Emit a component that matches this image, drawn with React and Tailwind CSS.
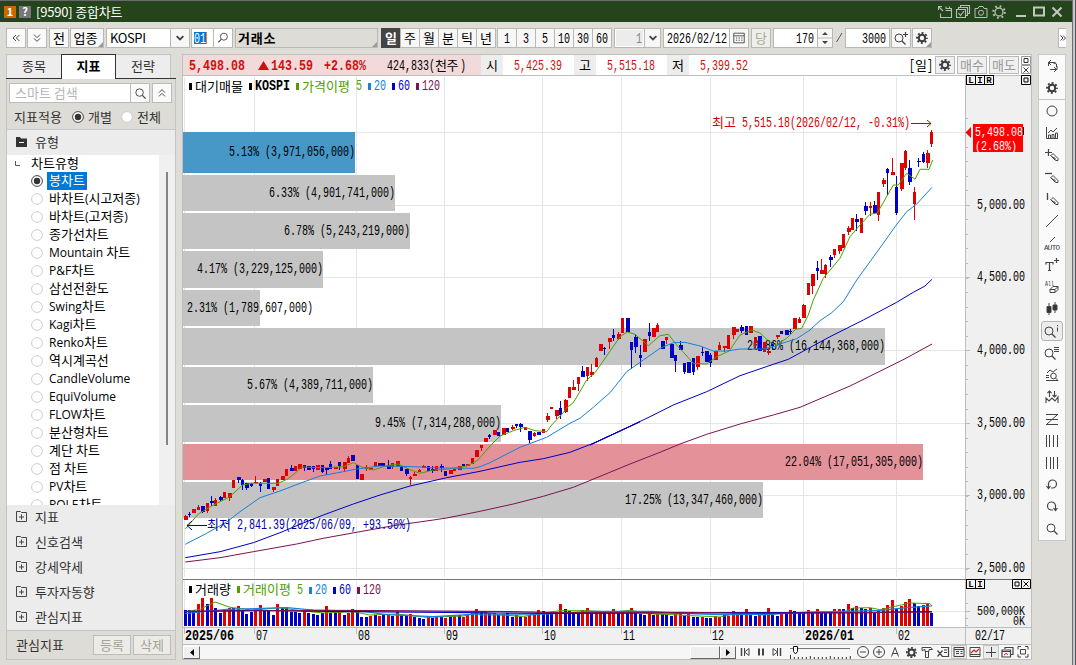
import React from "react";

const K = "font-['Noto_Sans_CJK_KR',sans-serif]";
const RED = "#e00000";
const BLUE = "#0000c8";
const GREEN = "#4ea000";
const SKY = "#1482d8";
const NAVY = "#0000c8";
const PLUM = "#7a1450";

/* ---------- text helpers ---------- */

// Condensed fixed-pitch text: each character takes `pitch` pixels.
function Mono({ children, pitch = 6, bold, className = "" }) {
  const s = String(children);
  return (
    <span className={"inline-block whitespace-pre text-left " + className} style={{ width: s.length * pitch }}>
      <span
        className={"inline-block origin-left font-['Liberation_Mono',monospace] text-[13px] leading-[16px] " + (bold ? "font-bold" : "")}
        style={{ transform: `scale(${pitch / 7.8}, 1.08)` }}
      >
        {s}
      </span>
    </span>
  );
}

function SMono({ x, y, children, fill = "#000", pitch = 6, bold, size = 14 }) {
  const s = String(children);
  return (
    <text x={x} y={y} fill={fill} fontSize={size} fontWeight={bold ? 700 : 400} fontFamily="'Liberation Mono', monospace" textLength={s.length * pitch} lengthAdjust="spacingAndGlyphs" xmlSpace="preserve">
      {s}
    </text>
  );
}

function SKor({ x, y, children, fill = "#000" }) {
  return (
    <text x={x} y={y} fill={fill} fontSize="13" fontFamily="'Noto Sans CJK KR', sans-serif">
      {children}
    </text>
  );
}

/* ---------- icons ---------- */

function Ico({ children, size = 16, color = "#444", className = "" }) {
  return (
    <svg width={size} height={size} viewBox="0 0 16 16" fill="none" stroke={color} strokeWidth="1" className={"shrink-0 " + className}>
      {children}
    </svg>
  );
}

const Gear = ({ color = "#3c3c3c", size = 16 }) => (
  <Ico color={color} size={size}>
    <circle cx="8" cy="8" r="3.2" strokeWidth="2" />
    <circle cx="8" cy="8" r="4.9" strokeWidth="2" strokeDasharray="1.92 1.93" strokeDashoffset="1" />
  </Ico>
);

const Mag = ({ dx = 0, dy = 0 }) => (
  <g transform={`translate(${dx} ${dy})`}>
    <circle cx="7" cy="7" r="4" />
    <path d="M10 10l3.5 3.5" strokeWidth="1.3" />
  </g>
);

const Pencil = () => <path d="M7 8.5l2-2 5 5v2h-2zM9.5 10l2 2M6.5 8.5l5 5" />;

const DownChev = () => (
  <Ico size={12}>
    <path d="M3.5 5.5L8 10l4.5-4.5" strokeWidth="2.4" />
  </Ico>
);

/* ---------- title bar ---------- */

function TitleBar() {
  return (
    <div className="flex h-[22px] items-center border-t border-[#6b6b6b] bg-[#24451b]">
      <div className={"ml-[4px] flex h-[12px] w-[12px] items-center justify-center bg-[#c86a00] text-[11px] font-bold text-white " + K}>1</div>
      <div className={"ml-[3px] flex h-[12px] w-[12px] items-center justify-center bg-[#777] text-[11px] font-bold text-white " + K}>?</div>
      <div className={"ml-[5px] whitespace-nowrap text-[13px] leading-[20px] tracking-[-0.2px] text-white " + K}>[9590] 종합차트</div>
      <div className="flex-1" />
      <div className="mr-[7px] flex items-center">
        <Ico color="#b9bdb6" className="mr-[2px]">
          <path d="M1.5 6V2.5H5M2 3l4 4M8.500 4.500h6v9h-11v-4M8.500 6.500h6M9 2.500v2M12.500 2.500v2" strokeWidth="1.1" />
        </Ico>
        <Ico color="#b9bdb6" className="mr-[2px]">
          <path d="M1.500 5.500h9v8h-9zM3.500 5V3.500h9v8H11M5.500 3V1.500h9v8H13M3.500 9l2 2.500L9 7" strokeWidth="1.100" />
        </Ico>
        <Ico color="#b9bdb6" className="mr-[2px]">
          <path d="M2 4.500h3l1-2h4l1 2h3v9H2z" />
          <circle cx="8" cy="8.800" r="2.500" />
        </Ico>
        <Ico color="#b9bdb6" className="mr-[6px]">
          <circle cx="8" cy="8" r="4" strokeWidth="1.300" />
          <circle cx="8" cy="8" r="5.800" strokeWidth="2" strokeDasharray="1.800 2.750" />
        </Ico>
        <Ico color="#c4c8c1" className="mr-[2px]">
          <path d="M3 12h10" strokeWidth="2" />
        </Ico>
        <Ico color="#c4c8c1" className="mr-[2px]">
          <path d="M3 3.500h10v8H3z" strokeWidth="2" />
        </Ico>
        <Ico color="#c4c8c1">
          <path d="M3.500 3.500l9 9M12.500 3.500l-9 9" strokeWidth="2" />
        </Ico>
      </div>
    </div>
  );
}

/* ---------- top toolbar ---------- */

function Box({ className = "", children }) {
  return (
    <div className={"relative flex h-[20px] shrink-0 items-center justify-center whitespace-nowrap border border-[#b9b9b4] text-[13px] leading-[18px] text-black " + K + " " + className}>
      {children}
    </div>
  );
}

const Corner = () => (
  <svg width="5" height="5" className="absolute right-0 bottom-0">
    <path d="M5 0v5H0z" fill="#999" />
  </svg>
);

function Toolbar() {
  const periods = ["주", "월", "분", "틱", "년"];
  const mins = ["1", "3", "5", "10", "30", "60"];
  return (
    <div className="flex h-[32px] items-center pl-[6px]">
      <Box className="w-[20px] bg-[#fafafa]">
        <Ico size={12}><path d="M8 4L4 8l4 4M12.500 4l-4 4 4 4" strokeWidth="1.300" /></Ico>
      </Box>
      <Box className="ml-[1px] w-[20px] bg-[#fafafa]">
        <Ico size={12}><path d="M4 3.500l4 4 4-4M4 8.500l4 4 4-4" strokeWidth="1.300" /></Ico>
      </Box>
      <Box className="ml-[2px] w-[20px] bg-[#f7f7f7]">전</Box>
      <Box className="ml-[1px] w-[34px] bg-[#f7f7f7] pr-[3px]">업종<Corner /></Box>
      <Box className="ml-[2px] w-[65px] justify-start! bg-white pl-[3px]"><span className="tracking-[-0.4px]">KOSPI</span></Box>
      <Box className="-ml-px w-[20px] bg-[#f7f7f7]"><DownChev /></Box>
      <Box className="ml-[1px] w-[23px] justify-start! bg-white pl-[2px]">
        <span className="flex h-[12px] w-[12px] items-center bg-[#0078d7] text-white"><Mono>01</Mono></span>
        <span className="h-[12px] w-px bg-[#f08020]" />
      </Box>
      <Box className="-ml-px w-[20px] bg-white">
        <Ico size={14}><circle cx="9" cy="6.500" r="4" /><path d="M6 9.500L2.500 13" strokeWidth="1.300" /></Ico>
      </Box>
      <Box className="ml-[2px] w-[143px] justify-start! bg-[#dddcd6] pl-[2px] font-bold tracking-[0.8px]">거래소<Corner /></Box>
      <div className="ml-[3px] flex">
        <Box className="w-[20px] border-[#444]! bg-[#444] font-bold text-white!">일</Box>
        {periods.map((p) => (
          <Box key={p} className="-ml-px w-[20px] bg-[#f7f7f7]">{p}</Box>
        ))}
      </div>
      <div className="ml-[1px] flex">
        {mins.map((p) => (
          <Box key={p} className="-ml-px w-[20px] bg-[#f7f7f7] first:ml-0"><Mono>{p}</Mono></Box>
        ))}
      </div>
      <Box className="ml-[2px] w-[31px] bg-white">
        <span className="flex h-[16px] w-[27px] items-center justify-end bg-[#ececec] pr-[1px] text-[#888]"><Mono>1</Mono></span>
      </Box>
      <Box className="-ml-px w-[17px] bg-[#f7f7f7]"><DownChev /></Box>
      <Box className="ml-[2px] w-[67px] bg-white"><Mono>2026/02/12</Mono></Box>
      <Box className="-ml-px w-[20px] bg-[#f7f7f7]">
        <Ico size={14}>
          <path d="M2 2.500h12v11H2zM2 5.500h12" />
          <path d="M4.500 8h8M4.500 10.500h8" strokeDasharray="1.500 1.500" />
        </Ico>
      </Box>
      <Box className="ml-[2px] w-[20px] bg-[#efefea] text-[#aaa898]!">당</Box>
      <Box className="ml-[2px] w-[45px] justify-end! bg-white pr-[3px]"><Mono>170</Mono></Box>
      <Box className="-ml-px w-[16px] flex-col bg-[#f7f7f7]">
        <svg width="14" height="18">
          <path d="M4 6l3-3 3 3zM4 12l3 3 3-3z" fill="#444" />
          <path d="M0 9h14" stroke="#b9b9b4" />
        </svg>
      </Box>
      <svg width="12" height="16"><path d="M3.500 12L9 3" stroke="#555" fill="none" /></svg>
      <Box className="w-[45px] justify-end! bg-white pr-[3px]"><Mono>3000</Mono></Box>
      <Box className="ml-[1px] w-[20px] bg-[#f7f7f7]">
        <Ico><Mag dx={-1} dy={1} /><path d="M10 4.500h5M12.500 2v5" strokeWidth="1.200" /></Ico>
      </Box>
      <Box className="ml-[1px] w-[20px] bg-[#f7f7f7]"><Gear /><Corner /></Box>
      <div className="flex-1" />
      <Box className="mr-[6px] w-[8px] border-r-0! bg-white">
        <svg width="6" height="8"><path d="M.5 1.500L3 4 .5 6.500M3 1.500L5.500 4 3 6.500" stroke="#444" fill="none" /></svg>
      </Box>
    </div>
  );
}

/* ---------- left panel ---------- */

function Radio({ on }) {
  return (
    <svg width="12" height="12" className="shrink-0">
      <circle cx="6" cy="6" r="5.400" fill="#fff" stroke={on ? "#444" : "#ccc"} />
      {on && <circle cx="6" cy="6" r="3.200" fill="#333" />}
    </svg>
  );
}

function Mixed({ text }) {
  return text.split(/([가-힣]+)/).filter(Boolean).map((s, i) => (
    <span key={i} className={/[가-힣]/.test(s) ? "text-[13px]" : "text-[12px]"}>{s}</span>
  ));
}

const chartTypes = ["봉차트", "바차트(시고저종)", "바차트(고저종)", "종가선차트", "Mountain 차트", "P&F차트", "삼선전환도", "Swing차트", "Kagi차트", "Renko차트", "역시계곡선", "CandleVolume", "EquiVolume", "FLOW차트", "분산형차트", "계단 차트", "점 차트", "PV차트", "POLE차트"];

function LeftPanel() {
  return (
    <div className={"flex h-[606px] w-[170px] flex-col text-[13px] text-[#333] " + K}>
      <div className="flex h-[25px] shrink-0 border-b border-[#333] leading-[22px]">
        <div className="w-[55px] border-t border-l border-[#c4c4c4] bg-[#ededed] text-center">종목</div>
        <div className="-mb-px h-[25px] w-[55px] border border-b-0 border-[#333] bg-white text-center font-bold text-black">지표</div>
        <div className="w-[55px] border-t border-r border-[#c4c4c4] bg-[#ededed] text-center">전략</div>
      </div>
      <div className="flex min-h-0 flex-1 flex-col border border-t-0 border-[#c4c4c4]">
        <div className="flex h-[28px] shrink-0 items-center pl-[2px]">
          <div className="h-[20px] w-[122px] border border-[#bbb] bg-white pl-[5px] leading-[17px] text-[#b5b5b5]">스마트 검색</div>
          <div className="-ml-px flex h-[20px] w-[20px] items-center justify-center border border-[#bbb] bg-[#fafafa]"><Ico size={15}><Mag /></Ico></div>
          <div className="ml-[2px] flex h-[20px] w-[20px] items-center justify-center border border-[#bbb] bg-[#fafafa]">
            <Ico size={12}><path d="M4 7.500l4-4 4 4M4 12.500l4-4 4 4" strokeWidth="1.300" /></Ico>
          </div>
        </div>
        <div className="flex h-[23px] shrink-0 items-center border-b border-[#c9c9c9] pb-[2px] pl-[7px]">
          <span className="w-[58px] whitespace-nowrap">지표적용</span><Radio on />
          <span className="ml-[4px] w-[33px] whitespace-nowrap">개별</span><Radio />
          <span className="ml-[4px] whitespace-nowrap">전체</span>
        </div>
        <div className="flex h-[25px] shrink-0 items-center bg-[#ececec] pb-[2px] pl-[9px]">
          <svg width="11" height="10"><path d="M0 0h4l1 1.500h6V10H0z" fill="#333" /><path d="M3 5.500h5" stroke="#fff" /></svg>
          <span className="ml-[8px]">유형</span>
        </div>
        <div className="flex h-[350px] shrink-0 overflow-hidden bg-[#f0f0f0]">
          <div className="w-[152px] overflow-hidden bg-white font-['Open_Sans','Noto_Sans_CJK_KR',sans-serif] text-black">
            <div className="flex h-[17px] items-center pl-[8px]">
              <svg width="6" height="6"><path d="M.5 0v4.500H5" fill="none" stroke="#555" /></svg>
              <span className="ml-[10px] text-[13px]">차트유형</span>
            </div>
            {chartTypes.map((t, i) => (
              <div key={t} className="flex h-[18px] items-center pl-[24px]">
                <Radio on={i === 0} />
                <span className={"ml-[4px] flex h-[18px] items-center whitespace-pre pr-[2px] pl-[2px] " + (i === 0 ? "bg-[#0078d7] text-white" : "")}>
                  <Mixed text={t} />
                </span>
              </div>
            ))}
          </div>
          <div className="mt-[17px] ml-[7px] h-[273px] w-[2px] bg-[#858585]" />
        </div>
        <div className="flex-1 bg-[#ececec]">
          {["지표", "신호검색", "강세약세", "투자자동향", "관심지표"].map((t) => (
            <div key={t} className="flex h-[25px] items-center pb-[2px] pl-[9px]">
              <svg width="11" height="11"><path d="M.5.500h4l1 1h5v9H.5zM3 6h5M5.500 3.500v5" fill="none" stroke="#444" /></svg>
              <span className="ml-[8px]">{t}</span>
            </div>
          ))}
        </div>
        <div className="flex h-[29px] shrink-0 items-center border-t border-[#c4c4c4] pl-[9px]">
          <span className="w-[77px] pb-px">관심지표</span>
          {["등록", "삭제"].map((t) => (
            <div key={t} className="mr-[2px] h-[20px] w-[38px] border border-[#bcbcb8] bg-[#ecebe8] text-center leading-[18px] text-[#a5a397]">{t}</div>
          ))}
        </div>
      </div>
    </div>
  );
}

/* ---------- price bar ---------- */

function PriceBar() {
  const cell = "flex h-full w-[22px] items-center justify-center bg-[#ededed]";
  const val = "flex h-full w-[71px] items-center bg-white pl-[11px] text-[#d01010]";
  const btn = "flex h-[18px] items-center justify-center border border-[#b9b9b9] bg-[#f0f0f0]";
  return (
    <div className={"flex h-[22px] items-center border-t border-b border-[#bfbfbf] bg-white text-[13px] " + K}>
      <div className="flex h-full w-[298px] items-center bg-[#f2dada] pl-[6px] font-bold text-[#d01010]">
        <Mono pitch={7} bold>5,498.08</Mono>
        <svg width="11" height="9" className="ml-[13px]"><path d="M5.500 0L11 9H0z" fill="#d01010" /></svg>
        <Mono pitch={7} bold className="ml-[2px]">143.59</Mono>
        <Mono pitch={7} bold className="ml-[11px]">+2.68%</Mono>
        <span className="ml-[21px] flex items-center font-normal text-black">
          <Mono>424,833(</Mono><span className="tracking-[-0.5px]">천주</span><Mono className="ml-[2px]">)</Mono>
        </span>
      </div>
      <div className={cell}>시</div><div className={val}><Mono>5,425.39</Mono></div>
      <div className={cell}>고</div><div className={val}><Mono>5,515.18</Mono></div>
      <div className={cell}>저</div><div className={val}><Mono>5,399.52</Mono></div>
      <div className="flex-1" />
      <span className="mr-[2px] flex items-center"><Mono>[</Mono>일<Mono>]</Mono></span>
      <div className={btn + " w-[20px]"}><Gear /></div>
      <div className={btn + " ml-[2px] w-[30px] text-[#999]"}>매수</div>
      <div className={btn + " ml-[2px] w-[30px] text-[#999]"}>매도</div>
      <svg width="10" height="18" className="ml-[2px]" fill="none" stroke="#333">
        <path d="M.5.500h9v8h-9zM.5 9.500h9v8h-9z" stroke="#999" />
        <path d="M3 2.500h4v4H3zM2.500 11.500l5 5M7.500 11.500l-5 5" />
      </svg>
    </div>
  );
}

/* ---------- chart data ---------- */

const P = 4.42;
const X0 = 185.5;
const cx = (i) => X0 + P * i;

// [direction, body top, body bottom, high?, low?] in thirds of a pixel below `base`
const candleBlocks = [
  { base: 430, rows: [
    "r257 269 254", "b253 255 246 262", "r237 249", "r230 240 225", "b227 246 227 250", "r219 243 219 250", "b213 220 198 228", "r210 228 205", "b201 210 198 217", "r186 205",
    "r189 204 189 213", "r150 175", "b141 150 141 160", "b149 164 147 180", "b159 175 159 180", "b163 168 160 170", "r155 160 138", "b158 168 155 186", "r147 157", "b144 177",
    "r171 180 171 186", "r147 168", "r138 150", "r117 138", "b113 123 104", "r108 123", "r101 117", "b104 114 104 123", "b107 120", "b107 118 107 125",
    "r104 119", "b104 125 104 130", "b113 120 113 136", "b103 118 93", "r112 118", "b96 108 96 121", "r97 118 97 123", "r83 99 78", "b74 92", "b104 147",
    "r131 150", "r110 118 105 123", "r113 119", "r97 107", "b98 108", "b99 109", "b104 118 90", "r100 112 100 118", "r94 108", "b108 123",
    "b117 132 117 138", "r141 147 137 165", "r133 137 126", "r121 126 116", "r107 115 104", "b107 122", "b117 123 109 128", "r107 122", "b107 115 103 125", "b123 138",
    "r120 131", "r117 122", "r108 120", "b102 109", "r101 108", "r84 101", "r59 80", "r45 55 45 63", "r24 36"] },
  { base: 410, rows: [
    "b75 81 72 88", "r60 74", "b66 77", "r54 75", "b53 66", "r51 57 45 60", "b42 48 42 54", "b42 52 39 66", "r51 60", "b63 90 63 98", "r69 77 66 80", "b66 75"] },
  { base: 300, rows: [
    "r388 398", "r347 360 339 366", "r320 326", "r330 347 330 357", "b324 346 303 357", "r300 335 297 338", "r261 293", "r261 269 240", "r231 251 231 273", "b213 231 198",
    "r202 227 202 242", "r215 225 192 230", "r174 200 171", "r132 153", "b144 147 141 165", "r114 126 114 147", "b105 115 87 124", "r102 116 97 120", "r54 99", "b54 96",
    "b126 150 126 208", "b111 141 102 159", "b165 174 135 200", "r117 156", "b96 108 69 122", "r84 111", "r75 96 69", "b123 147", "r111 120 111 132", "b131 174",
    "b165 183 165 215", "b135 150 123", "b189 216 189 222", "b186 220", "b174 216 174 224", "r168 201 168 210", "b155 158 141 168", "b153 186", "b165 189 159 200", "r154 180",
    "r135 151 126", "r138 144 138 155", "r105 147", "r81 104 81 117", "r87 95", "b81 94 75 98", "b78 105", "r78 98", "r111 128 111 147", "b108 153",
    "r126 155", "r153 158 145 165", "b126 137 126 150", "r105 110 105 117", "b93 102", "b91 104", "b93 95 87 101", "r54 87"] },
  { base: 110, rows: [
    "r627 640 620", "r585 624 581", "r519 555", "r492 527 492 551", "b474 482 453 510", "r480 491 447", "r465 492 462 503", "b441 450 435 471", "r417 435 417 443", "r405 423 405 431",
    "r372 413", "r354 366 348 375", "r324 360", "b327 335 312 362", "r324 369", "b288 303 276 314", "r288 293 276 317", "b285 308 273", "r246 315 246 332", "r210 221 204 230",
    "b177 188 174 255", "r186 195 144", "b231 308 198 314", "r159 237 159 242", "r123 174 120 180", "b174 215 150 224", "r246 282 231 330", "b153 157 144 170", "b132 155 126 160", "r129 159 120 174", "r66 101 60 110"] },
];

const candles = candleBlocks.flatMap(({ base, rows }) =>
  rows.map((r) => {
    const n = r.slice(1).split(" ").map(Number);
    const y = (v) => base + v / 3;
    return { up: r[0] === "r", t: y(n[0]), b: y(n[1]), h: y(n[2] ?? n[0]), l: y(n[3] ?? n[1]) };
  })
);

const volumes = (
  "b48 b48 b48 r66 r84 b66 r84 b54 b39 r47 r55 b54 r60 b48 b36 b43 r48 r63 b47 b45 b33 r66 b54 b55 b42 b42 b39 r47 b39 b36 " +
  "b33 b39 r60 b39 b40 r43 b33 r39 r51 b42 b27 b27 r30 b33 r30 b33 r36 b31 r43 b32 b30 r36 b27 b24 b21 r30 b25 r30 b26 r24 " +
  "b28 r30 b33 r28 r36 r39 r51 b43 r45 b39 r39 b36 r36 b39 b27 r33 b28 r27 r33 r33 r48 b45 b36 b36 r36 r66 b51 b45 b40 b38 " +
  "r48 r54 b39 r39 r42 b39 r42 r51 b38 r38 b42 r54 b39 b37 b33 r36 b33 r36 b36 b34 b30 r35 r36 b30 r36 b27 b27 r27 b24 b24 " +
  "r30 r27 b33 r30 r45 r40 b36 r51 b35 b31 r35 b35 r54 b36 b30 r35 b36 r48 b45 b38 b40 r48 b38 r51 b43 b41 b38 " +
  "r51 r51 b51 r66 b54 r60 b53 b51 r55 b38 r45 r54 r63 r78 b51 r60 r72 r81 b68 b60 r63 r68 b39"
).split(" ").map((s) => ({ up: s[0] === "r", h: Number(s.slice(1)) / 3 }));

const line = (...segs) =>
  segs.flatMap(([ox, oy, pts]) => pts.split(" ").map((p) => {
    const [x, y] = p.split(",").map(Number);
    return (ox + x / 3).toFixed(1) + "," + (oy + y / 3).toFixed(1);
  })).join(" ");

const ma5 = line(
  [180, 430, "16,297 55,252 95,228 148,201 188,165 215,160 294,160 321,148 345,130 365,111 430,113 490,110 520,98 545,111 580,120 620,107 655,102 690,119 720,130 760,120 800,118 860,108 890,93"],
  [480, 410, "0,143 30,108 60,78 100,62 135,52 165,62 200,65 215,45 250,8"],
  [540, 300, "78,325 100,308 140,240 165,218 200,168 240,110 262,96 285,103 325,137 360,107 385,103 410,135 435,162 460,190 500,192 530,170 568,153 600,105 635,90 660,99 690,127 710,136"],
  [780, 110, "0,697 20,685 47,658 65,655 85,615 100,570 130,505 180,445 210,380 240,345 270,313 292,309 340,225 355,225 380,190 405,208 420,178 447,178 458,150"]
);
const ma20 = line(
  [180, 430, "16,343 80,310 140,276 180,245 240,203 300,183 360,160 420,138 480,127 530,117 600,108 700,110 780,114 880,115"],
  [480, 410, "0,170 30,158 120,112 200,82 270,40"],
  [540, 300, "120,355 160,322 210,278 260,215 310,180 360,145 400,128 435,127 480,138 520,153 560,153 600,147 670,147 710,137"],
  [780, 110, "0,702 50,686 90,660 120,632 155,608 190,575 230,510 270,455 310,400 345,350 380,305 410,282 435,255 456,232"]
);
const ma60 = line(
  [180, 430, "16,383 120,365 220,338 300,308 360,283 430,255 520,222 600,195 690,168 800,143"],
  [480, 410, "0,184 120,157 190,146 270,127 340,100 420,63 480,35"],
  [540, 300, "150,435 240,393 330,350 400,315 500,275 600,227 700,193"],
  [780, 110, "25,748 150,680 250,630 350,577 400,547 435,528 456,508"]
);
const ma120 = line(
  [180, 430, "16,396 120,383 220,365 350,342 430,325 540,305 640,287 760,270 800,264"],
  [480, 410, "0,304 100,282 190,259 280,232 370,195 450,162 540,127 600,102"],
  [540, 300, "500,403 600,372 700,345 780,322"],
  [780, 110, "210,828 372,748 456,702"]
);
const v5 = line(
  [180, 430, "16,545 60,538 105,516 150,532 215,540 300,533 360,542 430,549 520,545 570,555 650,552 740,562 850,558 900,546"],
  [480, 410, "0,608 80,616 130,620 180,610 240,602 320,602 400,606 450,601 520,612 600,615"],
  [680, 560, "0,166 60,168 120,171 170,160 250,165 330,158 420,155 490,157 520,144 570,143 600,149 640,140 690,129 750,131 756,138"]
);
const v20 = line(
  [180, 430, "16,551 60,546 140,538 320,533 400,540 540,543 620,554 760,560 900,552"],
  [480, 410, "0,615 150,614 240,610 330,604 515,604"],
  [680, 560, "0,160 120,164 260,163 380,157 490,154 600,151 680,143 756,138"]
);
const v60 = line([180, 430, "30,545 220,541 450,544 800,547 950,549 1140,550"], [680, 560, "0,159 120,158 380,158 560,158 640,156 756,155"]);
const v120 = line([180, 430, "16,544 390,541 600,542 990,545 1140,548"], [680, 560, "0,157 240,160 560,158 756,156"]);

const profile = [
  [132, 41, 355, 229, 156, "5.13% (3,971,056,000)", "#4797c7"],
  [175, 36, 395, 269, 197, "6.33% (4,901,741,000)"],
  [213, 36, 410, 284, 235, "6.78% (5,243,219,000)"],
  [251, 37, 323, 197, 273, "4.17% (3,229,125,000)"],
  [290, 36, 260, 187, 312, "2.31% (1,789,607,000)"],
  [328, 37, 885, 747, 350, "20.86% (16,144,368,000)"],
  [367, 36, 373, 247, 389, "5.67% (4,389,711,000)"],
  [405, 37, 501, 375, 427, "9.45% (7,314,288,000)"],
  [444, 36, 923, 785, 466, "22.04% (17,051,305,000)", "#e4929a"],
  [482, 36, 763, 625, 504, "17.25% (13,347,460,000)"],
];

const gridX = [184.5, 254.5, 356.5, 444.5, 542.5, 621.5, 710.5, 803.5, 896.5];
const gridY = [132.5, 205.5, 277.5, 350.5, 423.5, 495.5, 568.5];
const priceLabels = ["", "5,000.00", "4,500.00", "4,000.00", "3,500.00", "3,000.00", "2,500.00"];
const months = [[185, "2025/06", 1], [256, "07"], [358, "08"], [446, "09"], [544, "10"], [623, "11"], [712, "12"], [805, "2026/01", 1], [898, "02"], [975, "02/17"]];

function Swatch({ x, y, fill }) {
  return <rect x={x} y={y} width="3" height="7" fill={fill} />;
}

function MaLegend({ x, y }) {
  return (
    <g>
      <Swatch x={x} y={y - 7} fill={SKY} /><SMono x={x + 6} y={y} fill={SKY}>20</SMono>
      <Swatch x={x + 24} y={y - 7} fill={NAVY} /><SMono x={x + 30} y={y} fill={NAVY}>60</SMono>
      <Swatch x={x + 48} y={y - 7} fill={PLUM} /><SMono x={x + 54} y={y} fill={PLUM}>120</SMono>
    </g>
  );
}

function LetterBoxes({ x, y, letters }) {
  return letters.map((l, i) => (
    <g key={l}>
      <rect x={x + i * 9 + 0.5} y={y + 0.5} width="9" height="9" fill="#f4f4f4" stroke="#000" />
      <text x={x + i * 9 + 5} y={y + 8.3} fontSize="9" fontWeight="700" textAnchor="middle" fontFamily="'Liberation Mono', monospace">{l}</text>
    </g>
  ));
}

function Chart() {
  return (
    <svg width="848" height="568" viewBox="183 76 848 568" className="block overflow-visible">
      <rect x="183" y="76" width="848" height="568" fill="#fff" />
      <g stroke="#e6e6e6" shapeRendering="crispEdges">
        {gridX.map((x) => <path key={x} d={`M${x} 77V577M${x} 581V627`} />)}
        {gridY.map((y) => <path key={y} d={`M183 ${y}H965`} />)}
        <path d="M183 611.500H965" />
      </g>
      <rect x="966" y="76" width="65" height="568" fill="#f0f0f0" />
      <rect x="183" y="628" width="848" height="16" fill="#f0f0f0" />

      {profile.map(([y, h, r, , , , c]) => <rect key={y} x="183" y={y} width={r - 183} height={h} fill={c || "#c4c4c4"} />)}
      {profile.map(([y, , , tx, ty, t]) => <SMono key={y} x={tx} y={ty}>{t}</SMono>)}

      <g shapeRendering="crispEdges">
        {candles.map((c, i) => {
          const x = Math.round(cx(i));
          const f = c.up ? RED : BLUE;
          return (
            <g key={i} fill={f}>
              <rect x={x - 2} y={Math.round(c.t)} width={i % 2 ? 3 : 4} height={Math.max(1, Math.round(c.b) - Math.round(c.t))} />
              <rect x={x - 1} y={Math.round(c.h)} width="1" height={Math.max(1, Math.round(c.l) - Math.round(c.h))} />
            </g>
          );
        })}
        {volumes.map((v, i) => {
          const x = Math.round(cx(i));
          const h = Math.round(v.h);
          return <rect key={i} x={x - 2} y={626 - h} width="3" height={h} fill={v.up ? RED : BLUE} />;
        })}
      </g>

      <g fill="none" strokeWidth="1">
        <polyline points={ma5} stroke={GREEN} />
        <polyline points={ma20} stroke={SKY} />
        <polyline points={ma60} stroke={NAVY} />
        <polyline points={ma120} stroke={PLUM} />
        <polyline points={v5} stroke={GREEN} />
        <polyline points={v20} stroke={SKY} strokeWidth="1.200" />
        <polyline points={v60} stroke={NAVY} strokeWidth="1.200" />
        <polyline points={v120} stroke={PLUM} strokeWidth="1.200" />
      </g>

      <SKor x={712} y={127} fill="#d00000">최고</SKor>
      <SMono x={742} y={127} fill="#d00000">5,515.18(2026/02/12, -0.31%)</SMono>
      <path d="M911 123.500H931M927 120l4 3.500-4 3.500" stroke="#d00000" fill="none" />
      <SKor x={207} y={529} fill="#0000a8">최저</SKor>
      <SMono x={237} y={529} fill="#0000a8">2,841.39(2025/06/09, +93.50%)</SMono>
      <path d="M207 525.500H187M192 521l-5 4.500 5 4.500" stroke="#0000a8" fill="none" />

      <Swatch x={189} y={83} fill="#000" /><SKor x={195} y={90.500}>대기매물</SKor>
      <Swatch x={249} y={83} fill="#000" /><SMono x={255} y={90} bold pitch={7}>KOSPI</SMono>
      <Swatch x={296} y={83} fill={GREEN} /><SKor x={302} y={90.500} fill={GREEN}>가격이평</SKor>
      <SMono x={356} y={90} fill={GREEN}>5</SMono>
      <MaLegend x={368} y={90} />
      <Swatch x={189} y={586} fill="#000" /><SKor x={195} y={594}>거래량</SKor>
      <Swatch x={237} y={586} fill={GREEN} /><SKor x={243} y={594} fill={GREEN}>거래이평</SKor>
      <SMono x={297} y={594} fill={GREEN}>5</SMono>
      <MaLegend x={309} y={594} />

      <g shapeRendering="crispEdges" stroke="#bdbdbd">
        <path d="M965.500 76V644M183 627.500H1031" />
        {gridX.map((x) => <path key={x} d={`M${x} 628v6`} />)}
        {Array.from({ length: 32 }, (_, i) => <path key={i} d={`M966 ${Math.round(117.500 + i * 14.550) + 0.5}h2`} />)}
        {gridY.map((y) => <path key={y} d={`M966 ${y}h4`} />)}
        <path d="M966 603.500h2M966 611.500h4M966 618.500h2M966 625.500h2" />
        <path d="M183 579.500H1031" stroke="#777" />
      </g>
      {gridY.map((y, i) => priceLabels[i] && <SMono key={y} x={977} y={y + 3}>{priceLabels[i]}</SMono>)}
      <SMono x={977} y={615} size={13}>500,000K</SMono>
      <SMono x={1013} y={625} size={13}>0K</SMono>
      {months.map(([x, t, b]) => <SMono key={x} x={x} y={640} bold={!!b} pitch={b ? 7 : 6}>{t}</SMono>)}

      <rect x="973" y="124" width="50" height="28" fill="#ff0000" />
      <path d="M965.500 132.500l5.500-5.500v11z" fill="#ff0000" />
      <path d="M1023.500 127v8" stroke="#000" />
      <SMono x={975} y={136} fill="#fff" size={13}>5,498.08</SMono>
      <SMono x={975} y={149.500} fill="#fff" size={13}>(2.68%)</SMono>

      <LetterBoxes x={966} y={75} letters={["L", "I", "R"]} />
      <LetterBoxes x={966} y={579} letters={["L", "I"]} />
      <g fill="#f4f4f4" stroke="#000">
        <path d="M1021.500 75.500h9v9h-9zM1024 78h4v4h-4zM1012.500 579.500h9v9h-9zM1021.500 579.500h9v9h-9zM1015 582h4v4h-4zM1023.500 581.500l5 5M1028.500 581.500l-5 5" />
      </g>
    </svg>
  );
}

/* ---------- bottom controls ---------- */

const wIco = (pressed) => "flex h-[14px] w-[16px] shrink-0 items-center justify-center " + (pressed ? "border border-[#c4c4c4] bg-[#ececec]" : "");
const bevel = "flex h-[13px] shrink-0 items-center justify-center border border-t-[#fff] border-l-[#fff] border-r-[#666] border-b-[#666] bg-[#efefef]";

function BottomBar() {
  return (
    <div className="flex h-[15px] items-center border-t border-[#bdbdbd] bg-[#f7f7f7]">
      <div className={bevel + " w-[17px]"}><svg width="4" height="7"><path d="M4 0v7L0 3.500z" /></svg></div>
      <div className="h-[14px] flex-1 bg-[#f6f6f4]" />
      <div className={bevel + " w-[30px]"} />
      <div className={bevel + " w-[16px]"}><svg width="4" height="7"><path d="M0 0v7L4 3.500z" /></svg></div>
      <div className="ml-[1px] flex">
        <div className={wIco()}><Ico><path d="M4.500 4v8" strokeWidth="1.500" /><path d="M12 4.500L7.500 8l4.500 3.500zM7.500 4v8" /></Ico></div>
        <div className={wIco()}><Ico><path d="M6 4.500v7M10 4.500v7" strokeWidth="2" /></Ico></div>
        <div className={wIco()}><Ico><path d="M11.500 4v8" strokeWidth="1.500" /><path d="M4 4.500L8.500 8 4 11.500zM8.500 4v8" /></Ico></div>
      </div>
      <svg width="70" height="14" className="shrink-0" fill="none" stroke="#333">
        <path d="M5 3.500h60" stroke="#777" />
        <path d="M5.500 10v4" /><path d="M9.300 12v2m4-2v2m4-2v2m4-2v2m4-3v3m4-2v2m4-2v2m4-2v2m4-2v2m4-3v3m4-2v2m4-2v2m4-2v2m4-2v2m4-3v3" />
        <path d="M8.500 1.500h4v5l-2 2.500-2-2.500z" fill="#fff" stroke="#111" />
      </svg>
      <div className="flex">
        <div className={wIco()}><Ico><circle cx="8" cy="8" r="5.500" /><path d="M5 8h6" /></Ico></div>
        <div className={wIco()}><Ico><circle cx="8" cy="8" r="5.500" /><path d="M5 8h6M8 5v6" /></Ico></div>
        <div className={wIco()}><Ico><path d="M4.500 12.500L8 3.500l3.500 9M5.500 9.500h5" /></Ico></div>
        <div className={wIco()}><Gear size={15} /></div>
        <div className={wIco()}><Ico><path d="M3 6.500v-3h9l1.500 2H10v2H6v-2zM6.500 8v5.500h3V8" /></Ico></div>
        <div className={wIco()}><Ico><path d="M6 3.500h7.500v9h-6M9 6h3M9 8.500h3M2.500 6.500l5 6M7.500 6.500l-5 6" strokeWidth="1.200" /></Ico></div>
        <div className={wIco(true)}><Ico><path d="M3 3.500h10v9H3zM3 5.500h10M5 7.500h3M9.500 7.500h2M5 9.500h3M9.500 9.500h2" /></Ico></div>
        <div className={wIco()}><Ico><path d="M3 3.500h10v9H3zM3 10.500h10" /><path d="M4 9l3-3 2 2 3-3" stroke="#d02020" strokeWidth="1.200" /></Ico></div>
        <div className={wIco(true)}><Ico><path d="M8.500 3v10M3 8.500h10" /></Ico></div>
        <div className={wIco()}><Ico><path d="M6 5V3.500h8v7h-2M3 6h8.500v7H3zM3 7.500h8.500" strokeWidth="1.200" /><path d="M5 11l2-1.500 2 1" stroke="#d02020" /></Ico></div>
        <div className={wIco()}><Ico><path d="M3 5.500v-3h3M10 2.500h3v3M13 10v3h-3M6 13H3v-3M5.500 5.500h5v4.500h-5z" /></Ico></div>
      </div>
    </div>
  );
}

/* ---------- right tool strip ---------- */

const tools = [
  <Ico key="t1"><path d="M4.500 8V4.500h7M4.500 4.500L7 2M4.500 4.500L7 7M4.500 4.500h4l4 1.500v3M13 8v3.500H6M10 9l2.500 2.500L10 14" /></Ico>,
  <Gear key="t2" />,
  <Ico key="t3"><circle cx="8" cy="8" r="5" /></Ico>,
  <Ico key="t4"><path d="M2.500 2v11.500H14M4 8l3-3 2 2 4-4M4.500 13v-3h2v3M8 13V9.500h2V13M11.500 13V8h2v5" /></Ico>,
  <Ico key="t5"><path d="M1 5.500h7M4.500 2v7" strokeWidth="1.200" /><Pencil /></Ico>,
  <Ico key="t6"><path d="M1 4.500h7" strokeWidth="1.300" /><Pencil /></Ico>,
  <Ico key="t7"><path d="M3.500 2v7" strokeWidth="1.300" /><Pencil /></Ico>,
  <Ico key="t8"><path d="M2 14L14 2" /></Ico>,
  <Ico key="t9"><path d="M6 7l5-5" /><text x="0" y="14.500" fontSize="7.500" textLength="16" fill="#333" stroke="none" fontFamily="'Liberation Mono', monospace">AUTO</text></Ico>,
  <Ico key="t10"><path d="M2 7.500V5.500h7v2M5.500 5.500v8M4 13.500h3M10 3.500h5M12.500 1v5" strokeWidth="1.200" /></Ico>,
  <Ico key="t11"><text x="1" y="6.500" fontSize="8" textLength="9" lengthAdjust="spacingAndGlyphs" fill="#333" stroke="none" fontFamily="'Liberation Mono', monospace">All</text><path d="M6 10.500l3-3h5l-3 3zM6 10.500v3h5l3-3v-3M11 10.500v3" /></Ico>,
  <Ico key="t12"><path d="M5 2v12M11 1v11" /><path d="M3 5.500h4v6H3zM9 4h4v5H9z" fill="#333" /></Ico>,
  <Ico key="t13"><Mag dx={-2} dy={1} /><path d="M13.500 2v1.200M13.500 4.500v4" /></Ico>,
  <Ico key="t14"><Mag dx={-2} dy={1} /><path d="M10 2.500h5M10 4.500h5M10 6.500h5" /></Ico>,
  <Ico key="t15"><path d="M3 6l3-3 3 2 4-3M2 8.500h3M2 10.500h3M2 13.500h12" /><circle cx="9.500" cy="9" r="2.800" /><path d="M11.500 11l2.500 2.500" /></Ico>,
  <Ico key="t16"><path d="M2 14V9l3 3 3-3 3 3 3-4v6M5.500 8V2M3.500 4l2-2 2 2M10.500 2v6M8.500 6l2 2 2-2" strokeWidth="1.100" /></Ico>,
  <Ico key="t17"><path d="M2 3.500h12M2 8.500h12M2 13.500h12M13 4L3 13" /></Ico>,
  <Ico key="t18"><path d="M2.500 2v12M5.500 2v12M9.500 2v12M13.500 2v12" /></Ico>,
  <Ico key="t19"><path d="M2.500 2v12M6.500 2v12M9.500 2v12M13.500 2v12" /></Ico>,
  <Ico key="t20"><path d="M4.500 11V7a4 4 0 1 1 4 4H7M2.500 9l2 2.500 2-2.500" strokeWidth="1.200" /></Ico>,
  <Ico key="t21"><path d="M11.500 11V7a4 4 0 1 0-4 4H9M9.500 9l2 2.500 2-2.500" strokeWidth="1.200" /></Ico>,
  <Ico key="t22"><Mag /></Ico>,
];

function ToolStrip() {
  return (
    <div className="h-[487px] w-[28px] border border-[#c8c8c8] bg-[#fafafa]">
      {tools.map((t, i) => (
        <div key={i} className={"flex items-center justify-center " + (i === 1 ? "h-[23px] border-b border-[#c4c4c4]" : "h-[22px]")}>
          {i === 12 ? <div className="flex h-[20px] w-[22px] items-center justify-center rounded-[3px] border border-[#b5b5b5] bg-[#ececec]">{t}</div> : t}
        </div>
      ))}
    </div>
  );
}

export default function App() {
  return (
    <div className="flex h-[665px] w-[1076px] overflow-hidden bg-[#dddcd6]">
      <div className="flex w-[1072px] flex-col">
        <TitleBar />
        <Toolbar />
        <div className="flex pl-[6px]">
          <LeftPanel />
          <div className="ml-[6px] h-[606px] w-[850px] border border-t-0 border-[#bfbfbf]">
            <PriceBar />
            <Chart />
            <BottomBar />
          </div>
          <div className="ml-[6px]"><ToolStrip /></div>
        </div>
      </div>
      <div className="w-px bg-[#6e6e6e]" />
      <div className="w-[2px] bg-[#c3c8cc]" />
      <div className="w-px bg-[#555]" />
    </div>
  );
}
